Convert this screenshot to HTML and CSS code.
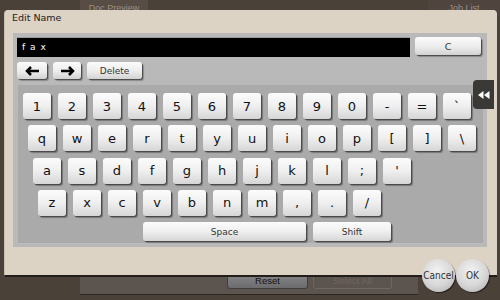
FILE: index.html
```html
<!DOCTYPE html>
<html>
<head>
<meta charset="utf-8">
<link rel="stylesheet" href="styles.css">
</head>
<body>
<div class="screen">
  <div class="topbar">
    <div class="tab tab-doc">Doc Preview</div>
    <div class="tab tab-job">Job List</div>
  </div>
  <div class="bottombar">
    <div class="bb-btn bb-reset">Reset</div>
    <div class="bb-btn bb-select">Select All</div>
  </div>
</div>

<div class="dialog">
  <div class="title">Edit Name</div>
  <div class="panel">
    <div class="row-input">
      <div class="field">f a x</div>
      <div class="btn btn-c">C</div>
    </div>
    <div class="row-edit">
      <div class="btn btn-arrow btn-left">
        <svg width="15" height="10" viewBox="0 0 15 10"><path d="M6 1 L2 5 L6 9 M2.5 5 H14" fill="none" stroke="#000" stroke-width="2.5"/></svg>
      </div>
      <div class="btn btn-arrow btn-right">
        <svg width="15" height="10" viewBox="0 0 15 10"><path d="M9 1 L13 5 L9 9 M12.5 5 H1" fill="none" stroke="#000" stroke-width="2.5"/></svg>
      </div>
      <div class="btn btn-delete">Delete</div>
    </div>
    <div class="keyboard">
      <div class="krow r1">
        <div class="key">1</div><div class="key">2</div><div class="key">3</div><div class="key">4</div><div class="key">5</div><div class="key">6</div><div class="key">7</div><div class="key">8</div><div class="key">9</div><div class="key">0</div><div class="key">-</div><div class="key">=</div><div class="key">`</div>
      </div>
      <div class="krow r2">
        <div class="key">q</div><div class="key">w</div><div class="key">e</div><div class="key">r</div><div class="key">t</div><div class="key">y</div><div class="key">u</div><div class="key">i</div><div class="key">o</div><div class="key">p</div><div class="key">[</div><div class="key">]</div><div class="key">\</div>
      </div>
      <div class="krow r3">
        <div class="key">a</div><div class="key">s</div><div class="key">d</div><div class="key">f</div><div class="key">g</div><div class="key">h</div><div class="key">j</div><div class="key">k</div><div class="key">l</div><div class="key">;</div><div class="key">'</div>
      </div>
      <div class="krow r4">
        <div class="key">z</div><div class="key">x</div><div class="key">c</div><div class="key">v</div><div class="key">b</div><div class="key">n</div><div class="key">m</div><div class="key">,</div><div class="key">.</div><div class="key">/</div>
      </div>
      <div class="krow r5">
        <div class="key key-space">Space</div><div class="key key-shift">Shift</div>
      </div>
    </div>
  </div>
</div>

<div class="sidetab">
  <svg width="12" height="8" viewBox="0 0 12 8"><path d="M0 4 L5.5 0 V8 Z M6 4 L11.5 0 V8 Z" fill="#fff"/></svg>
</div>

<div class="round round-cancel">Cancel</div>
<div class="round round-ok">OK</div>
</body>
</html>
```

FILE: styles.css
```css
html, body {
  margin: 0;
  padding: 0;
}
body {
  width: 500px;
  height: 300px;
  overflow: hidden;
  background: #4a4139;
  font-family: "DejaVu Sans", sans-serif;
  position: relative;
}

/* background screen */
.screen {
  width: 500px;
  height: 300px;
  display: flex;
  flex-direction: column;
  justify-content: space-between;
}
.topbar {
  height: 16px;
  display: flex;
}
.tab {
  height: 16px;
  background: #574d45;
  color: #9a9088;
  font-family: "Liberation Sans", sans-serif;
  font-size: 9px;
  line-height: 17px;
  text-align: center;
}
.tab-doc {
  margin-left: 80px;
  width: 68px;
}
.tab-job {
  margin-left: auto;
  width: 72px;
  background: #4f453e;
}
.bottombar {
  margin-left: 80px;
  width: 338px;
  height: 26px;
  margin-bottom: 5px;
  background: #5c544e;
  border-bottom: 1px solid #2c2621;
  box-sizing: border-box;
  display: flex;
  align-items: flex-end;
  padding: 0 0 5px 147px;
  gap: 5px;
}
.bb-btn {
  height: 16px;
  box-sizing: border-box;
  font-family: "Liberation Sans", sans-serif;
  font-size: 9.5px;
  line-height: 14px;
  text-align: center;
  border-radius: 3px;
}
.bb-reset {
  width: 81px;
  background: linear-gradient(#868688, #6c6c6e);
  color: #111;
  border: 1px solid #3e3e3e;
}
.bb-select {
  width: 79px;
  border: 1px solid #6f6760;
  color: #6f6760;
}

/* dialog */
.dialog {
  position: absolute;
  left: 5px;
  top: 10px;
  width: 492px;
  height: 265px;
  background: #dcd3c4;
  border-radius: 4px 4px 0 0;
  box-shadow: 0 2px 0 #221d18, -1px 0 0 #c9bfae;
  display: flex;
  flex-direction: column;
}
.title {
  height: 23px;
  padding-left: 7px;
  font-size: 9.5px;
  line-height: 15px;
  color: #1c1c1c;
  font-family: "DejaVu Sans", sans-serif;
}
.panel {
  margin-left: 8px;
  width: 474px;
  height: 214px;
  background: #b9b9b9;
  box-sizing: border-box;
  padding: 4px 4px 3px 4px;
  display: flex;
  flex-direction: column;
}
.row-input {
  display: flex;
  gap: 5px;
  height: 20px;
}
.field {
  width: 393px;
  height: 20px;
  box-sizing: border-box;
  background: #000;
  border-top: 1px solid #9a9a9a;
  color: #fff;
  font-size: 9px;
  line-height: 18px;
  padding-left: 5px;
  letter-spacing: 1px;
}
.btn {
  box-sizing: border-box;
  background: linear-gradient(#fbfbfb, #ececec 55%, #d2d2d2);
  border-radius: 3px;
  box-shadow: 1px 1px 0 #4e4e4e, 2px 2px 1px rgba(0,0,0,0.25);
  display: flex;
  align-items: center;
  justify-content: center;
  color: #333;
  font-size: 9px;
}
.btn-c {
  width: 66px;
  height: 18px;
  font-size: 9.5px;
}
.row-edit {
  margin-top: 5px;
  display: flex;
  gap: 6px;
  height: 19px;
}
.btn-arrow, .btn-delete {
  height: 17px;
}
.btn-left { width: 30px; }
.btn-right { width: 28px; }
.btn-delete { width: 55px; }

.keyboard {
  margin-top: 4px;
  margin-left: 1px;
  width: 465px;
  height: 159px;
  background: #aaaaaa;
  box-sizing: border-box;
  padding: 8px 0 0 5px;
  display: flex;
  flex-direction: column;
  gap: 6.3px;
  border-bottom: 1px solid #bcbcbc;
}
.krow {
  display: flex;
  gap: 7px;
}
.r2 { padding-left: 5px; }
.r3 { padding-left: 10px; }
.r4 { padding-left: 15px; }
.r5 { padding-left: 120px; }
.key {
  width: 28px;
  height: 26px;
  box-sizing: border-box;
  background: linear-gradient(#fcfcfc, #efefef 50%, #d6d6d6);
  border-radius: 3px;
  box-shadow: 1px 1px 0 #4a4a4a, 2px 2px 1px rgba(0,0,0,0.3);
  display: flex;
  align-items: center;
  justify-content: center;
  color: #111;
  font-size: 13px;
}
.key-space {
  width: 163px;
  height: 19px;
  font-size: 9px;
  color: #333;
}
.key-shift {
  width: 78px;
  height: 19px;
  font-size: 9px;
  color: #333;
}

/* overlay bits */
.sidetab {
  position: absolute;
  left: 473px;
  top: 80px;
  width: 21px;
  height: 29px;
  background: #3b3936;
  border-radius: 4px 0 0 4px;
  display: flex;
  align-items: center;
  justify-content: center;
}
.round {
  position: absolute;
  top: 259px;
  width: 33px;
  height: 33px;
  border-radius: 50%;
  background: radial-gradient(circle at 45% 35%, #f2f2f2, #d6d6d6 55%, #a9a9a9);
  box-shadow: 1px 1px 1px rgba(0,0,0,0.5);
  display: flex;
  align-items: center;
  justify-content: center;
  font-family: "Liberation Sans Narrow", "DejaVu Sans Condensed", sans-serif;
  font-size: 10px;
  color: #333;
}
.round-cancel { left: 422px; }
.round-ok { left: 456px; }
```
